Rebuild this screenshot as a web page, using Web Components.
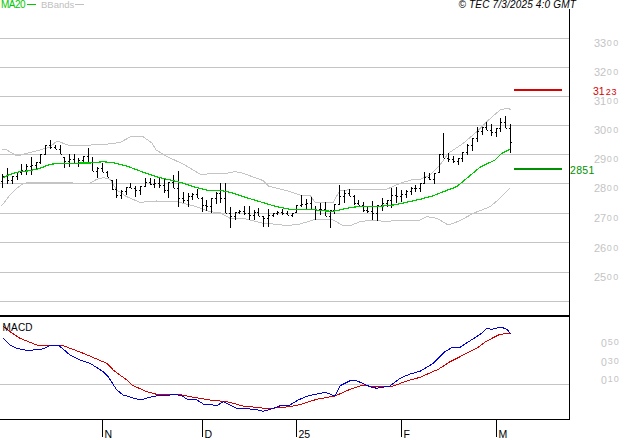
<!doctype html>
<html><head><meta charset="utf-8"><title>TEC chart</title>
<style>html,body{margin:0;padding:0;background:#fff;overflow:hidden}</style></head>
<body>
<stock-chart></stock-chart>
<script>
const GRID='#c4c4c4';
const z=(pts,ox,oy)=>pts.map(([a,b])=>[ox+a/3,oy+b/3]);
const fmt=p=>p.map(([x,y])=>x.toFixed(1)+','+y.toFixed(1)).join(' ');
const line=(p,c,w=1)=>`<polyline fill="none" stroke="${c}" stroke-width="${w}" shape-rendering="crispEdges" points="${fmt(p)}"/>`;
const hr=(y,x1,x2,c,w=1)=>`<line x1="${x1}" x2="${x2}" y1="${y}" y2="${y}" stroke="${c}" stroke-width="${w}" shape-rendering="crispEdges"/>`;
const vr=(x,y1,y2,c,w=1)=>`<line x1="${x}" x2="${x}" y1="${y1}" y2="${y2}" stroke="${c}" stroke-width="${w}" shape-rendering="crispEdges"/>`;
const label=(x,y,big,small,c)=>`<text x="${x}" y="${y}" fill="${c}" font-size="11">${big}<tspan font-size="9" dy="-1" dx="0.5" letter-spacing="1.6">${small}</tspan></text>`;

class ChartHeader extends HTMLElement{
  constructor(){super();this.attachShadow({mode:'open'}).innerHTML=`<style>
  :host{display:flex;height:9px;width:576px;justify-content:space-between;font:10px/9px "Liberation Sans",Arial,sans-serif;white-space:nowrap;overflow:visible}
  .left{display:flex;align-items:center;padding-left:1px}
  .k{display:inline-block;height:1px;width:9px;margin-left:2px;background:currentColor}
  .ma{color:#00c800;letter-spacing:-.5px;display:flex;align-items:center;width:40px}
  .bb{color:#c0c0c0;font-size:9.5px;display:flex;align-items:center;letter-spacing:0}
  .c{font-style:italic;color:#000;letter-spacing:.18px}
  </style><div class="left"><span class="ma">MA20<i class="k"></i></span><span class="bb">BBands<i class="k" style="margin-left:1px"></i></span></div><div class="c">© TEC 7/3/2025 4:0 GMT</div>`;}
}
class PricePane extends HTMLElement{
  constructor(){super();
    const hl1=[[7,103,143],[22,85,133],[37,107,133],[52,95,120],[65,72,105],[79,72,105],[95,52,105],[108,65,87],[122,42,72],[137,15,42],[152,0,28],[166,15,28],[180,15,42],[193,52,83],[208,43,80],[222,43,72],[236,55,80],[250,47,70],[265,25,65],[278,50,92],[292,80,113],[307,70,95],[322,92,112],[336,120,150],[350,118,175],[365,150,178],[380,140,165],[392,128,143],[406,138,170],[422,137,165],[436,115,142],[450,115,135],[464,118,143],[478,113,143],[492,113,158],[506,125,175],[521,105,145],[536,93,200],[550,157,190],[564,158,200],[578,158,180],[593,147,175],[607,172,215],[620,180,212]];
    const hl2=[[5,175,220],[18,155,193],[32,130,190],[46,130,218],[60,200,265],[75,215,240],[88,210,222],[103,198,225],[118,198,240],[132,210,240],[146,205,228],[160,228,260],[175,207,262],[190,218,232],[203,212,225],[218,208,225],[232,212,225],[247,218,230],[260,195,215],[273,165,200],[289,178,208],[303,170,208],[316,198,240],[331,188,225],[346,185,228],[361,210,265],[374,193,222],[389,135,192],[403,150,188],[418,148,168],[432,165,195],[446,180,195],[460,185,215],[473,200,220],[487,183,240],[502,195,243],[517,175,212],[531,180,200],[545,145,203],[560,142,190],[575,150,185],[589,150,175],[603,140,165],[617,135,155]];
    const hl3=[[1,280,305],[14,247,280],[28,250,270],[44,250,282],[58,193,245],[70,130,203],[85,190,215],[100,197,218],[114,203,225],[128,187,215],[143,162,195],[157,145,182],[171,112,155],[186,112,135],[200,96,120],[214,102,137],[228,113,140],[242,85,125],[256,78,115],[271,102,188]];
    const conv=(l,ox,oy)=>l.map(([x,a,b])=>[Math.round(ox+x/3-.5)+.5,oy+a/3,oy+b/3]);
    const bars=[...conv(hl1,0,140),...conv(hl2,210,140),...conv(hl3,420,90)];
    const clamp=(v,a,b)=>Math.max(a,Math.min(b,v));
    let s='',prev=null;
    bars.forEach((b,i)=>{
      const [x,hi,lo]=b,n=bars[i+1];
      const o=prev===null?(hi+lo)/2:clamp(prev,hi,lo);
      const c=i===bars.length-1?142:clamp(n?(n[1]+n[2])/2:lo,hi,lo);
      prev=c;
      s+=vr(x,Math.round(hi),Math.round(lo),'#000')+hr(Math.round(o)+.5,x-1.5,x,'#000')+hr(Math.round(c)+.5,x,x+1.5,'#000');
    });
    const ma=[...z([[8,113],[30,103],[60,95],[90,92],[120,85],[150,73],[180,70],[270,69],[310,65],[340,68],[380,78],[430,97],[480,113],[540,127],[590,143],[630,152]],0,140),
      ...z([[35,152],[60,157],[100,170],[150,185],[200,200],[240,208],[310,208],[330,212],[370,214],[420,203],[450,199],[510,199],[550,195],[590,187],[630,178]],210,140),
      ...z([[40,317],[70,305],[110,290],[140,265],[180,232],[225,210],[245,190],[270,178]],420,90)];
    const up=[[2,149],[5,149],[17,156],[28,153],[40,150],[50,147],[57,141],[68,145],[82,146],[100,144],[108,144],[120,142.5],[132,136],[142,136],[152,143],[156,150],[168,157],[183,164],[200,174],[207,174],
      ...z([[20,100],[50,100],[75,95],[100,100],[160,122],[175,138],[230,152],[270,165],[300,165],[315,187],[370,187],[390,150],[410,150],[440,148],[510,150],[530,148],[570,130],[610,118],[630,118]],210,140),
      ...z([[30,255],[60,225],[85,190],[130,160],[170,125],[200,95],[240,60],[260,55],[272,58]],420,90)];
    const lowb=[...z([[5,197],[30,165],[50,145],[70,130],[100,127],[270,130],[290,118],[310,113],[330,118],[350,150],[380,170],[420,187],[470,183],[530,185],[580,197],[630,215]],0,140),
      ...z([[30,218],[60,235],[100,235],[160,250],[200,253],[230,257],[270,252],[310,240],[345,238],[370,240],[400,257],[420,257],[450,245],[490,240],[530,245],[560,240],[630,240]],210,140),
      ...z([[20,380],[50,385],[85,405],[120,392],[160,370],[210,350],[240,325],[270,295]],420,90)];
    const grids=[38,67,96,125,154,183,213,242,272,301].map(y=>hr(y+.5,0,569,GRID)).join('');
    const labels=[[3300,47],[3200,76],[3100,105],[3000,134],[2900,163],[2800,192],[2700,222],[2600,252],[2500,281]]
      .map(([v,y])=>label(594,y,String(v).slice(0,2),'00',GRID)).join('');
    this.attachShadow({mode:'open'}).innerHTML=`<style>:host{display:block;width:627px;height:306px}svg{display:block;font-family:"Liberation Sans",Arial,sans-serif}</style>
    <svg width="627" height="306" viewBox="0 9 627 306">${grids}${line(up,GRID)}${line(lowb,GRID)}${s}${line(ma,'#00c800',1.2)}
    ${vr(569.5,9,315,'#000')}${labels}
    ${hr(90,514,562,'#d80000',2)}<text x="593" y="94.5" fill="#d80000" font-size="10.5">31<tspan font-size="9" dx="1" letter-spacing=".8">23</tspan></text>
    ${hr(169,514,562,'#009000',2)}<text x="570" y="173.5" fill="#009000" font-size="10.5" letter-spacing=".3">2851</text>
    </svg>`;}
}
class MacdPane extends HTMLElement{
  constructor(){super();
    const blue=[...z([[8,83],[30,105],[50,115],[75,120],[100,120],[125,118],[150,107],[175,105],[210,135],[240,150],[270,160],[310,185],[325,200],[350,240],[370,255],[420,270],[450,262],[480,255],[505,257],[520,252],[545,257],[560,267],[590,270],[610,282],[630,283]],0,310),
      ...z([[20,287],[40,275],[80,295],[135,298],[160,304],[200,292],[215,285],[240,285],[265,270],[290,259],[320,252],[345,247],[375,258],[390,227],[420,212],[440,212],[480,230],[500,235],[540,228],[570,205],[600,192],[630,184]],210,310),
      ...z([[40,160],[75,125],[95,113],[120,112],[185,70],[200,55],[215,58],[240,52],[255,55],[265,62],[272,72]],420,310)];
    const red=[...z([[8,47],[30,65],[60,85],[110,105],[190,107],[250,130],[320,160],[340,180],[380,210],[395,225],[440,245],[470,253],[540,254],[580,262],[630,270]],0,310),
      ...z([[50,275],[100,288],[150,293],[170,296],[240,290],[270,284],[320,268],[375,258],[420,238],[450,228],[470,227],[490,230],[550,228],[590,213],[630,202]],210,310),
      ...z([[55,178],[90,155],[120,140],[170,115],[200,93],[240,73],[270,70]],420,310)];
    const lab=[[346,'50'],[365,'30'],[383,'10']].map(([y,t])=>`<text x="601" y="${y+1}" fill="${GRID}" font-size="10.5">0<tspan font-size="9" dx="1" dy="-2" letter-spacing=".8">${t}</tspan></text>`).join('');
    this.attachShadow({mode:'open'}).innerHTML=`<style>:host{display:block;width:627px;height:105px}svg{display:block;font-family:"Liberation Sans",Arial,sans-serif}</style>
    <svg width="627" height="105" viewBox="0 315 627 105">${hr(316,0,570,'#000',2)}${hr(384.5,0,569,GRID)}
    ${line(red,'#d00000')}${line(blue,'#0000d0')}
    <text x="2.5" y="331" fill="#000" font-size="10" letter-spacing=".2">MACD</text>
    ${vr(569.5,315,420,'#000')}${hr(419.5,0,570,'#000')}${lab}</svg>`;}
}
class TimeAxis extends HTMLElement{
  constructor(){super();
    const t=[[102.5,'N'],[202.5,'D'],[296.5,'25'],[401.5,'F'],[496.5,'M']];
    this.attachShadow({mode:'open'}).innerHTML=`<style>:host{display:block;width:627px;height:20px}svg{display:block;font-family:"Liberation Sans",Arial,sans-serif}</style>
    <svg width="627" height="20" viewBox="0 420 627 20">${t.map(([x,s])=>vr(x,420,437,'#000')+`<text x="${x+2}" y="438" fill="#000" font-size="10.5">${s}</text>`).join('')}</svg>`;}
}
class StockChart extends HTMLElement{
  constructor(){super();this.attachShadow({mode:'open'}).innerHTML=`<style>:host{display:flex;flex-direction:column;width:627px;height:440px;background:#fff;overflow:hidden}</style>
  <chart-header></chart-header><price-pane></price-pane><macd-pane></macd-pane><time-axis></time-axis>`;}
}
customElements.define('chart-header',ChartHeader);
customElements.define('price-pane',PricePane);
customElements.define('macd-pane',MacdPane);
customElements.define('time-axis',TimeAxis);
customElements.define('stock-chart',StockChart);
</script>
</body></html>
